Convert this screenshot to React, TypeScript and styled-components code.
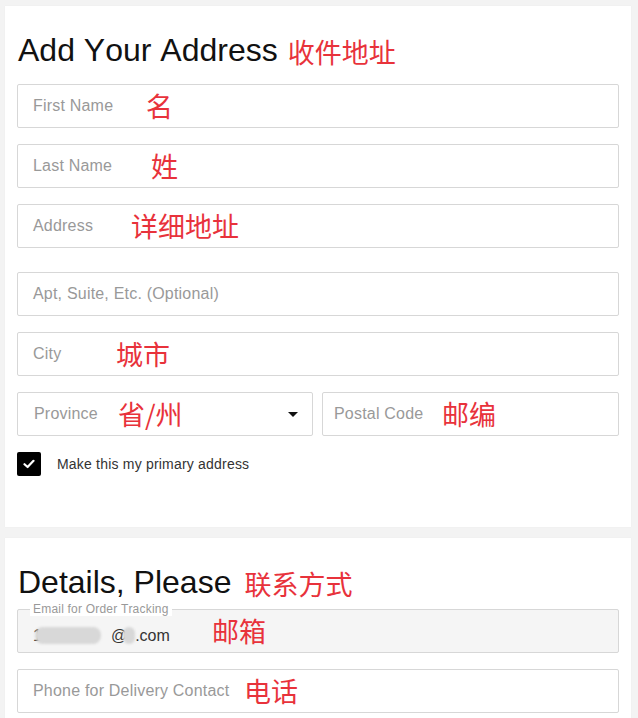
import React from "react";
import styled, { createGlobalStyle } from "styled-components";

const Global = createGlobalStyle`
  html, body { margin: 0; padding: 0; background: #f3f3f3; }
  body { font-family: "Liberation Sans", Arial, sans-serif; font-kerning: none; }
  * { box-sizing: border-box; }
`;

const Page = styled.div`
  padding: 6px 7px 0 5px;
  display: flex;
  flex-direction: column;
  gap: 11px;
`;

const Card = styled.section<{ $bottom: number }>`
  background: #fff;
  padding: 25px 12px ${(p) => p.$bottom}px 12px;
  box-shadow: 0 0 1px rgba(0, 0, 0, 0.06);
`;

const Heading = styled.h2`
  margin: 0;
  font-family: "Liberation Sans", Arial, sans-serif;
  font-kerning: none;
  font-weight: 400;
  font-size: 32px;
  line-height: 38px;
  color: #111;
  padding-left: 1px;
`;

const Note = styled.span`
  font-family: "Noto Sans CJK SC", "Noto Sans", sans-serif;
  font-size: 27px;
  line-height: 1;
  color: #e8323b;
  white-space: nowrap;
`;

const HeadNote = styled(Note)<{ $gap: number }>`
  margin-left: ${(p) => p.$gap}px;
  vertical-align: -2px;
`;

const FieldNote = styled(Note)<{ $x: number }>`
  position: absolute;
  top: 50%;
  left: ${(p) => p.$x}px;
  transform: translateY(-52%);
`;

const Stack = styled.div<{ $top: number }>`
  display: flex;
  flex-direction: column;
  gap: 16px;
  margin-top: ${(p) => p.$top}px;
`;

const Field = styled.div<{ $filled?: boolean; $extra?: boolean; $pad?: number }>`
  position: relative;
  height: 44px;
  border: 1px solid #d7d7d7;
  border-radius: 2px;
  background: ${(p) => (p.$filled ? "#f5f5f5" : "#fff")};
  display: flex;
  align-items: center;
  padding: 0 15px 0 ${(p) => p.$pad ?? 15}px;
  margin-top: ${(p) => (p.$extra ? 8 : 0)}px;
`;

const Placeholder = styled.span`
  font-family: "Liberation Sans", Arial, sans-serif;
  font-size: 16px;
  letter-spacing: 0.2px;
  color: #999;
  white-space: nowrap;
`;

const Row = styled.div`
  display: grid;
  grid-template-columns: 296px 1fr;
  gap: 9px;
`;

const Caret = styled.span`
  position: absolute;
  right: 14px;
  top: 50%;
  margin-top: -2px;
  width: 0;
  height: 0;
  border-left: 5px solid transparent;
  border-right: 5px solid transparent;
  border-top: 5px solid #111;
`;

const CheckRow = styled.label`
  display: flex;
  align-items: center;
  gap: 16px;
`;

const Box = styled.span`
  width: 24px;
  height: 24px;
  border-radius: 2px;
  background: #000;
  display: flex;
  align-items: center;
  justify-content: center;
`;

const CheckText = styled.span`
  font-family: "Liberation Sans", Arial, sans-serif;
  font-size: 14px;
  letter-spacing: 0.2px;
  color: #333;
`;

const Legend = styled.span`
  position: absolute;
  top: -8px;
  left: 12px;
  padding: 0 3px;
  background: #fff;
  font-family: "Liberation Sans", Arial, sans-serif;
  font-size: 12px;
  letter-spacing: 0.2px;
  line-height: 14px;
  color: #999;
`;

const Value = styled.div`
  display: flex;
  align-items: center;
  margin-top: 9px;
  font-family: "Liberation Sans", Arial, sans-serif;
  font-size: 16px;
  color: #333;
`;

const Blur = styled.span<{ $w: number; $shift: number }>`
  display: inline-block;
  width: ${(p) => p.$w}px;
  height: 17px;
  margin-left: ${(p) => p.$shift}px;
  border-radius: 8px;
  background: #d8d8d8;
  filter: blur(1px);
`;

const Spacer = styled.span<{ $w: number }>`
  display: inline-block;
  width: ${(p) => p.$w}px;
`;

export default function App() {
  return (
    <>
      <Global />
      <Page>
        <Card $bottom={51}>
          <Heading>
            Add Your Address<HeadNote $gap={10}>收件地址</HeadNote>
          </Heading>
          <Stack $top={15}>
            <Field>
              <Placeholder>First Name</Placeholder>
              <FieldNote $x={128}>名</FieldNote>
            </Field>
            <Field>
              <Placeholder>Last Name</Placeholder>
              <FieldNote $x={133}>姓</FieldNote>
            </Field>
            <Field>
              <Placeholder>Address</Placeholder>
              <FieldNote $x={113}>详细地址</FieldNote>
            </Field>
            <Field $extra>
              <Placeholder>Apt, Suite, Etc. (Optional)</Placeholder>
            </Field>
            <Field>
              <Placeholder>City</Placeholder>
              <FieldNote $x={98}>城市</FieldNote>
            </Field>
            <Row>
              <Field $pad={16}>
                <Placeholder>Province</Placeholder>
                <FieldNote $x={100}>省/州</FieldNote>
                <Caret />
              </Field>
              <Field $pad={11}>
                <Placeholder>Postal Code</Placeholder>
                <FieldNote $x={119}>邮编</FieldNote>
              </Field>
            </Row>
            <CheckRow>
              <Box>
                <svg width="12" height="10" viewBox="0 0 12 10">
                  <path
                    d="M1.5 5.2 L4.6 8 L10.5 1.8"
                    fill="none"
                    stroke="#fff"
                    strokeWidth="2.2"
                    strokeLinecap="round"
                    strokeLinejoin="round"
                  />
                </svg>
              </Box>
              <CheckText>Make this my primary address</CheckText>
            </CheckRow>
          </Stack>
        </Card>
        <Card $bottom={24}>
          <Heading>
            Details, Please<HeadNote $gap={13}>联系方式</HeadNote>
          </Heading>
          <Stack $top={8}>
            <Field $filled>
              <Legend>Email for Order Tracking</Legend>
              <Value>
                <span>1</span>
                <Blur $w={66} $shift={-7} />
                <Spacer $w={10} />
                <span>@</span>
                <Blur $w={12} $shift={-4} />
                <span>.com</span>
              </Value>
              <FieldNote $x={194}>邮箱</FieldNote>
            </Field>
            <Field>
              <Placeholder>Phone for Delivery Contact</Placeholder>
              <FieldNote $x={226}>电话</FieldNote>
            </Field>
          </Stack>
        </Card>
      </Page>
    </>
  );
}
